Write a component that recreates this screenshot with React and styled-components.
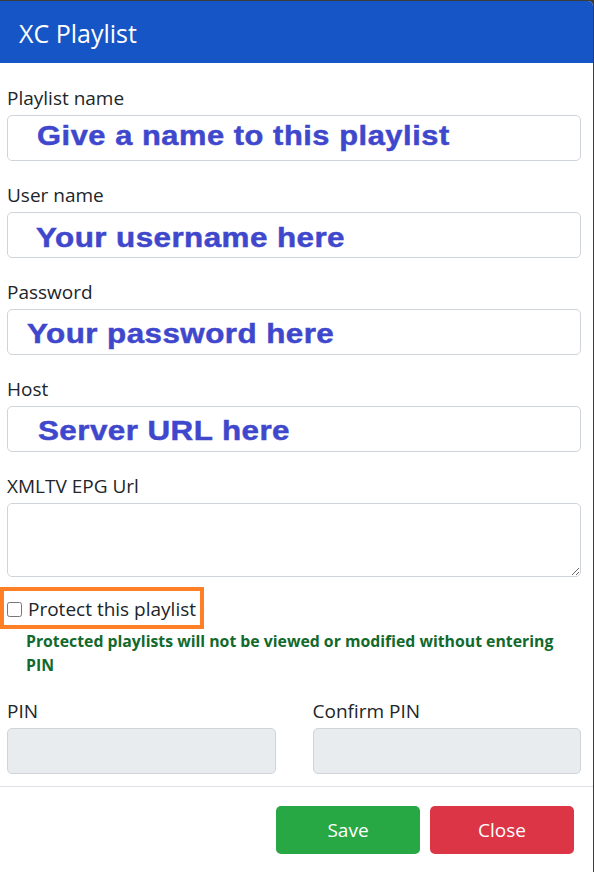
import React from 'react'
import styled, { createGlobalStyle } from 'styled-components'

const GlobalStyle = createGlobalStyle`
    html, body {
        margin: 0;
        padding: 0;
        background: #3c3c3c;
    }
    * {
        box-sizing: border-box;
    }
`;

const Modal = styled.div`
    width: 593px;
    margin-top: 1px;
    min-height: 871px;
    background: #fff;
    border-top-right-radius: 5px;
    font-family: 'Open Sans', 'Noto Sans', sans-serif;
    color: #212529;
    overflow: hidden;
`;

const Header = styled.div`
    height: 62px;
    background-color: #1655c5;
    display: flex;
    align-items: center;
    padding: 2px 0 0 19px;
`;

const Title = styled.h5`
    margin: 0;
    font-size: 25px;
    font-weight: 400;
    line-height: 30px;
    color: #fff;
`;

const Body = styled.div`
    padding: 21px 12px 12px 7px;
`;

const Group = styled.div`
    margin-bottom: ${props => props.gap || "20px"};
`;

const Label = styled.label`
    display: block;
    font-size: 19px;
    line-height: 28px;
    margin-bottom: 3px;
`;

const Field = styled.div`
    height: ${props => props.h || "46px"};
    border: 1px solid #ced4da;
    border-radius: 5px;
    background: ${props => props.disabled ? "#e9ecef" : "#fff"};
    padding: ${props => props.top || "0px"} 0 0 ${props => props.left || "0px"};
    overflow: hidden;
`;

// painted-on hint text inside the inputs (wide, heavy Arial)
const Scribble = styled.span`
    display: inline-block;
    font-family: 'Liberation Sans', Arial, sans-serif;
    font-weight: 700;
    font-size: ${props => props.size || "28px"};
    line-height: 27px;
    letter-spacing: ${props => props.spacing || "0.4px"};
    color: #3f48cc;
    -webkit-text-stroke: 0.5px #3f48cc;
    white-space: nowrap;
    transform: scaleX(1.12);
    transform-origin: left center;
`;

const TextArea = styled.textarea`
    display: block;
    width: 100%;
    height: 74px;
    border: 1px solid #ced4da;
    border-radius: 5px;
    resize: vertical;
    font-family: inherit;
    font-size: 19px;
    outline: 0;
`;

const Highlight = styled.div`
    display: inline-flex;
    align-items: center;
    margin-left: -7px;
    height: 42px;
    border: 4px solid #ff7f27;
    padding: 2px 4px 0 3px;
`;

const Check = styled.input`
    width: 15px;
    height: 15px;
    margin: 0 6px 0 0;
`;

const CheckText = styled.span`
    font-size: 19px;
    line-height: 28px;
`;

const Hint = styled.div`
    padding-left: 19px;
    margin-bottom: 20px;
    font-size: 15.8px;
    font-weight: 700;
    line-height: 24px;
    color: #12692c;
`;

const Row = styled.div`
    display: grid;
    grid-template-columns: 1fr 1fr;
    column-gap: 37px;
`;

const Footer = styled.div`
    border-top: 1px solid #dee2e6;
    padding: 19px 19px 0 0;
    display: flex;
    justify-content: flex-end;
    gap: 10px;
`;

const Button = styled.button`
    width: 144px;
    height: 48px;
    border: none;
    border-radius: 5px;
    background-color: ${props => props.color};
    color: #fff;
    font-family: inherit;
    font-size: 19px;
`;

const fields = [
    { label: "Playlist name", text: "Give a name to this playlist", left: "29px", top: "6px", size: "27.5px", spacing: "0.5px" },
    { label: "User name", text: "Your username here", left: "28px", top: "11px" },
    { label: "Password", text: "Your password here", left: "19px", top: "10px" },
    { label: "Host", text: "Server URL here", left: "30px", top: "10px" },
];

const App = () => {
    return (
        <>
            <GlobalStyle />
            <Modal>
                <Header>
                    <Title>XC Playlist</Title>
                </Header>
                <Body>
                    {fields.map((f, idx) => (
                        <Group key={idx}>
                            <Label>{f.label}</Label>
                            <Field left={f.left} top={f.top}>
                                <Scribble size={f.size} spacing={f.spacing}>{f.text}</Scribble>
                            </Field>
                        </Group>
                    ))}
                    <Group gap="10px">
                        <Label>XMLTV EPG Url</Label>
                        <TextArea />
                    </Group>
                    <Highlight>
                        <Check type="checkbox" />
                        <CheckText>Protect this playlist</CheckText>
                    </Highlight>
                    <Hint>Protected playlists will not be viewed or modified without entering PIN</Hint>
                    <Row>
                        <div>
                            <Label>PIN</Label>
                            <Field disabled />
                        </div>
                        <div>
                            <Label>Confirm PIN</Label>
                            <Field disabled />
                        </div>
                    </Row>
                </Body>
                <Footer>
                    <Button color="#28a745">Save</Button>
                    <Button color="#dc3545">Close</Button>
                </Footer>
            </Modal>
        </>
    )
}

export default App
